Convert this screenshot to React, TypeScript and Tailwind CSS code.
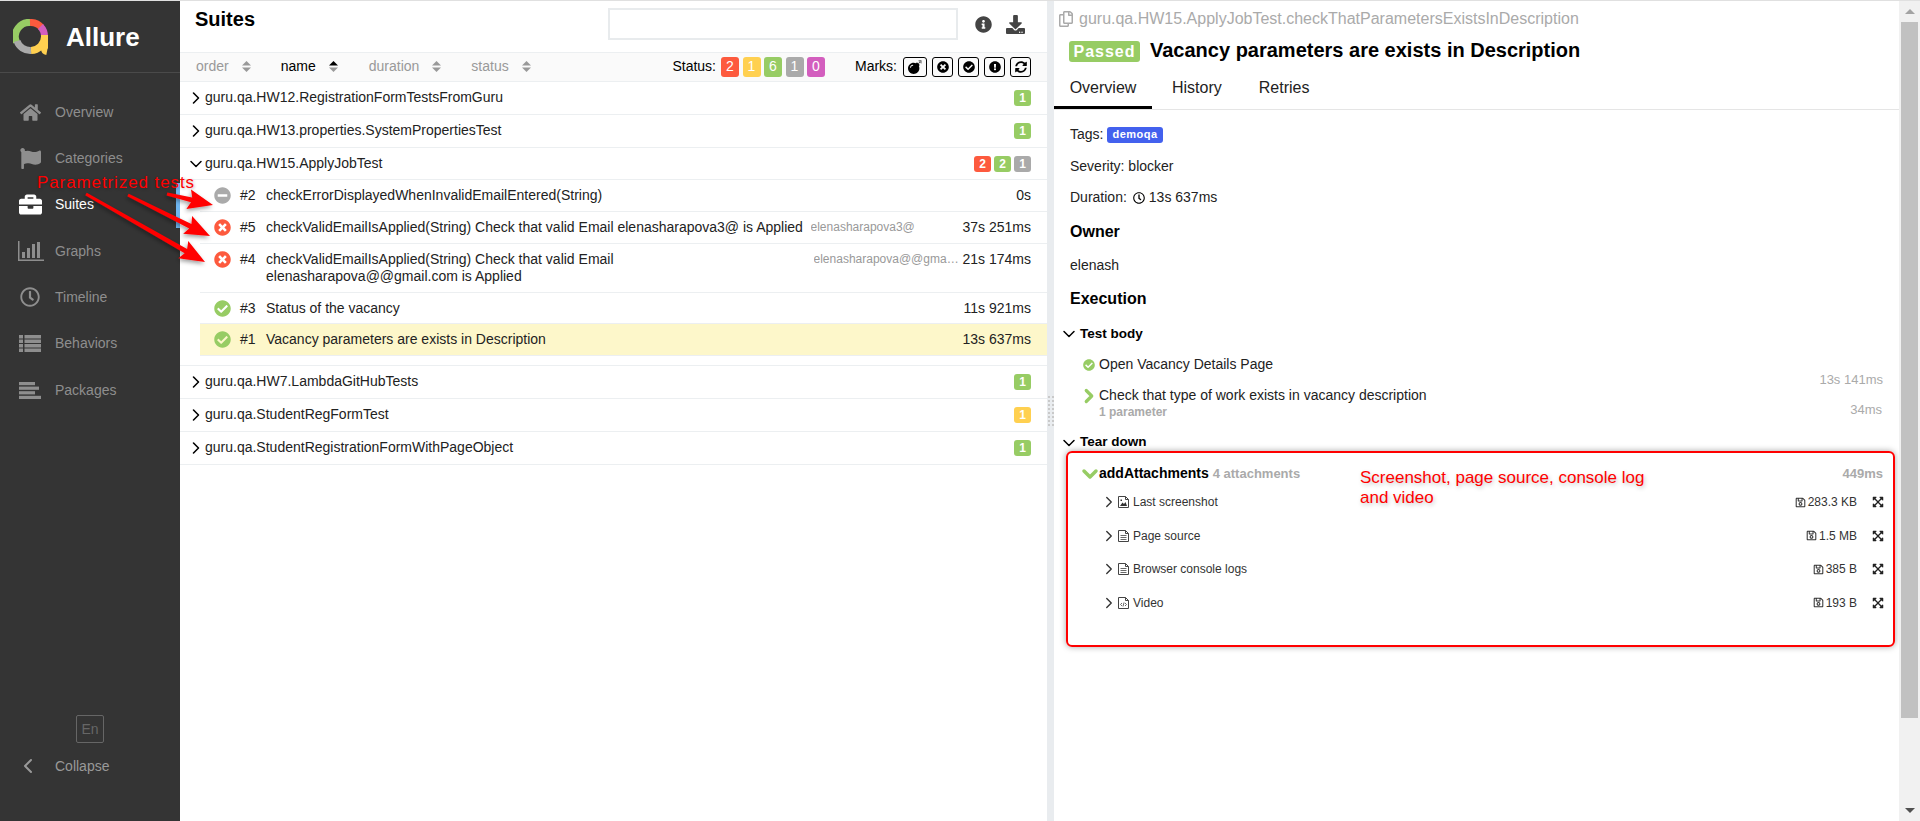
import type { ReactNode } from 'react';
import {
  FaBomb,
  FaBriefcase,
  FaCheckCircle,
  FaDownload,
  FaExclamationCircle,
  FaExpandArrowsAlt,
  FaFlag,
  FaHome,
  FaInfoCircle,
  FaMinusCircle,
  FaRegClock,
  FaRegCopy,
  FaRegSave,
  FaSyncAlt,
  FaTimesCircle,
} from 'react-icons/fa';
import { ChevronDown, ChevronLeft, ChevronRight } from 'lucide-react';

function BarChartIcon() {
  return (
    <svg width="26" height="20" viewBox="0 0 26 20" fill="currentColor" className="ml-[2px]">
      <rect x="0" y="0" width="1.5" height="20" />
      <rect x="0" y="18.5" width="26" height="1.5" />
      <rect x="4" y="11" width="3" height="6" />
      <rect x="9" y="7" width="3" height="10" />
      <rect x="14" y="3" width="3" height="14" />
      <rect x="19" y="1" width="3" height="16" />
    </svg>
  );
}

function BehaviorsIcon() {
  return (
    <svg width="22" height="17" viewBox="0 0 22 17" fill="currentColor">
      {[0, 4.5, 9, 13.5].map((y) => (
        <g key={y}>
          <rect x="0" y={y} width="4" height="3.5" />
          <rect x="5.5" y={y} width="16.5" height="3.5" />
        </g>
      ))}
    </svg>
  );
}

function PackagesIcon() {
  return (
    <svg width="22" height="17" viewBox="0 0 22 17" fill="currentColor">
      <rect x="0" y="0" width="16" height="3.2" />
      <rect x="0" y="4.6" width="20" height="3.2" />
      <rect x="0" y="9.2" width="16" height="3.2" />
      <rect x="0" y="13.8" width="22" height="3.2" />
    </svg>
  );
}

function Logo() {
  return (
    <svg width="36" height="36" viewBox="0 0 36 36" fill="none" strokeWidth="7">
      <path d="M3.5 23 A14 14 0 0 1 18 3.5" stroke="#97cc64" />
      <path d="M17 3.5 A14 14 0 0 1 28.5 8.5" stroke="#fd5a3e" />
      <path d="M27.5 7.5 A14 14 0 0 1 31.5 17.5" stroke="#d35ebe" />
      <path d="M31.5 16 V30 Q31.5 32 34 32.5 M31.5 17.5 A14 14 0 0 1 18 31.5" stroke="#ffd050" />
      <path d="M18 31.5 A14 14 0 0 1 4 22" stroke="#aaaaaa" />
    </svg>
  );
}

const navItems: { label: string; icon: ReactNode; active?: boolean }[] = [
  { label: 'Overview', icon: <FaHome size={21} /> },
  { label: 'Categories', icon: <FaFlag size={21} /> },
  { label: 'Suites', icon: <FaBriefcase size={23} />, active: true },
  { label: 'Graphs', icon: <BarChartIcon /> },
  { label: 'Timeline', icon: <FaRegClock size={20} /> },
  { label: 'Behaviors', icon: <BehaviorsIcon /> },
  { label: 'Packages', icon: <PackagesIcon /> },
];

function Sidebar() {
  return (
    <aside className="relative flex h-full w-[180px] shrink-0 flex-col bg-[#343434]">
      <div className="flex h-[72px] items-center gap-[17px] border-b border-[#4a4a4a] pl-[13px] pt-[1px]">
        <Logo />
        <span className="text-[26px] font-bold text-white">Allure</span>
      </div>
      <nav className="flex flex-col pt-[16px]">
        {navItems.map((item) => (
          <div
            key={item.label}
            className={`flex h-[46.33px] items-center ${item.active ? 'text-white' : 'text-[#8e8e8e]'}`}
          >
            <span className="flex w-[55px] justify-center pl-[5px]">{item.icon}</span>
            <span className="text-[14px]">{item.label}</span>
          </div>
        ))}
      </nav>
      <div className="mt-auto flex flex-col pb-[41px]">
        <div className="ml-[76px] flex h-[28px] w-[28px] items-center justify-center rounded-[2px] border border-[#666] text-[14px] text-[#666]">
          En
        </div>
        <div className="mt-[9px] flex h-[28px] items-center text-[#999]">
          <span className="flex w-[55px] justify-center pl-[1px]">
            <ChevronLeft size={24} strokeWidth={2} />
          </span>
          <span className="text-[14px]">Collapse</span>
        </div>
      </div>
      <div className="absolute right-0 top-[182px] h-[45px] w-[4px] bg-[#6eb5f0]" />
    </aside>
  );
}

function SortCaret({ active }: { active?: boolean }) {
  return (
    <svg width="9" height="11" viewBox="0 0 9 11" className="ml-[13px]">
      <path d="M4.5 0 L9 4.5 H0 Z" fill={active ? '#000' : '#999'} />
      <path d="M4.5 11 L9 6.5 H0 Z" fill="#999" />
    </svg>
  );
}

const statusBg: Record<string, string> = {
  failed: 'bg-[#fd5a3e]',
  broken: 'bg-[#ffd050]',
  passed: 'bg-[#97cc64]',
  skipped: 'bg-[#aaaaaa]',
  unknown: 'bg-[#d35ebe]',
};

function Count({ status, n, large }: { status: string; n: number; large?: boolean }) {
  return (
    <span
      className={`flex items-center justify-center rounded-[3px] text-white ${statusBg[status]} ${
        large ? 'h-[20px] w-[18px] text-[14px]' : 'h-[16px] w-[17px] text-[12px] font-bold'
      }`}
    >
      {n}
    </span>
  );
}

function Mark({ children, wide }: { children: ReactNode; wide?: boolean }) {
  return (
    <span
      className={`flex h-[20px] items-center justify-center rounded-[3px] border border-black text-black ${
        wide ? 'w-[24px]' : 'w-[21px]'
      }`}
    >
      {children}
    </span>
  );
}

function SuitesToolbar() {
  return (
    <div className="flex h-[30px] items-center border-y border-[#eceff1] bg-[#fafafa] pb-[1px] pl-[16px] pr-[16px] text-[14px]">
      <span className="text-[#999]">order</span>
      <SortCaret />
      <span className="ml-[30px] text-black">name</span>
      <SortCaret active />
      <span className="ml-[31px] text-[#999]">duration</span>
      <SortCaret />
      <span className="ml-[30px] text-[#999]">status</span>
      <SortCaret />
      <span className="ml-auto text-black">Status:</span>
      <div className="ml-[5px] flex gap-[3.5px]">
        <Count status="failed" n={2} large />
        <Count status="broken" n={1} large />
        <Count status="passed" n={6} large />
        <Count status="skipped" n={1} large />
        <Count status="unknown" n={0} large />
      </div>
      <span className="ml-[30px] text-black">Marks:</span>
      <div className="ml-[6px] flex gap-[5px]">
        <Mark wide><FaBomb size={14} /></Mark>
        <Mark><FaTimesCircle size={12} /></Mark>
        <Mark><FaCheckCircle size={12} /></Mark>
        <Mark><FaExclamationCircle size={12} /></Mark>
        <Mark><FaSyncAlt size={12} /></Mark>
      </div>
    </div>
  );
}

function GroupRow({
  name,
  open,
  counts,
}: {
  name: string;
  open?: boolean;
  counts: [string, number][];
}) {
  return (
    <div
      className={`flex items-center border-b border-[#eceff1] pl-[7px] pr-[16px] text-[14px] text-[#222] ${
        open ? 'h-[32px]' : 'h-[33px]'
      }`}
    >
      <span className="flex w-[18px] justify-center text-black">
        {open ? (
          <ChevronDown size={20} strokeWidth={1.8} className="shrink-0" />
        ) : (
          <ChevronRight size={20} strokeWidth={1.9} className="shrink-0" />
        )}
      </span>
      <span className="pb-[1px]">{name}</span>
      <div className="ml-auto flex gap-[3px]">
        {counts.map(([status, n]) => (
          <Count key={status} status={status} n={n} />
        ))}
      </div>
    </div>
  );
}

const statusIcon: Record<string, ReactNode> = {
  skipped: <FaMinusCircle size={17} className="text-[#aaaaaa]" />,
  failed: <FaTimesCircle size={17} className="text-[#fd5a3e]" />,
  passed: <FaCheckCircle size={17} className="text-[#97cc64]" />,
};

type TestRowProps = {
  status: string;
  order: number;
  name: ReactNode;
  param?: string;
  time: string;
  selected?: boolean;
  compact?: boolean;
  paramClass?: string;
};

function TestRow({ status, order, name, param, time, selected, compact, paramClass }: TestRowProps) {
  return (
    <div
      className={`ml-[20px] flex items-start border-b border-[#eceff1] pt-[7px] pr-[16px] text-[14px] leading-[17px] ${
        compact ? 'pb-[6px]' : 'pb-[7px]'
      } ${selected ? 'bg-[#fdf7ca]' : ''}`}
    >
      <span className="flex w-[40px] justify-center pl-[4px]">{statusIcon[status]}</span>
      <span className="w-[26px] text-[#222]">#{order}</span>
      <span className="min-w-0 flex-1 text-[#222]">{name}</span>
      {param && (
        <span className={`truncate text-left text-[12px] text-[#999] ${paramClass}`}>{param}</span>
      )}
      <span className="whitespace-nowrap text-right text-[#222]">{time}</span>
    </div>
  );
}

function SuitesPanel() {
  return (
    <section className="flex h-full w-[867px] shrink-0 flex-col">
      <div className="flex h-[51px] items-start pl-[15px] pr-[22px]">
        <h2 className="pt-[5px] text-[20px] font-bold leading-[26px] text-black">Suites</h2>
        <div className="ml-auto mt-[7px] h-[32px] w-[350px] border-2 border-[#e8ebed]" />
        <FaInfoCircle size={17} className="ml-[17px] mt-[15px] text-[#444]" />
        <FaDownload size={19} className="ml-[14px] mt-[14px] text-[#444]" />
      </div>
      <SuitesToolbar />
      <GroupRow name="guru.qa.HW12.RegistrationFormTestsFromGuru" counts={[['passed', 1]]} />
      <GroupRow name="guru.qa.HW13.properties.SystemPropertiesTest" counts={[['passed', 1]]} />
      <GroupRow
        name="guru.qa.HW15.ApplyJobTest"
        open
        counts={[['failed', 2], ['passed', 2], ['skipped', 1]]}
      />
      <TestRow status="skipped" order={2} name="checkErrorDisplayedWhenInvalidEmailEntered(String)" time="0s" />
      <TestRow
        status="failed"
        order={5}
        name="checkValidEmailIsApplied(String) Check that valid Email elenasharapova3@ is Applied"
        param="elenasharapova3@"
        paramClass="mr-[6px] w-[146px]"
        time="37s 251ms"
      />
      <TestRow
        status="failed"
        order={4}
        name={
          <>
            checkValidEmailIsApplied(String) Check that valid Email
            <br />
            elenasharapova@@gmail.com is Applied
          </>
        }
        param="elenasharapova@@gmail.com"
        paramClass="mr-[2px] w-[147px]"
        time="21s 174ms"
      />
      <TestRow status="passed" order={3} name="Status of the vacancy" time="11s 921ms" compact />
      <TestRow status="passed" order={1} name="Vacancy parameters are exists in Description" time="13s 637ms" selected />
      <div className="h-[10px] border-b border-[#eceff1]" />
      <GroupRow name="guru.qa.HW7.LambdaGitHubTests" counts={[['passed', 1]]} />
      <GroupRow name="guru.qa.StudentRegFormTest" counts={[['broken', 1]]} />
      <GroupRow name="guru.qa.StudentRegistrationFormWithPageObject" counts={[['passed', 1]]} />
    </section>
  );
}

function Splitter() {
  return (
    <div className="flex h-full w-[7px] shrink-0 items-center justify-center bg-[#e9ecef]">
      <div className="grid grid-cols-2 gap-[2px]">
        {Array.from({ length: 16 }).map((_, i) => (
          <span key={i} className="h-[2px] w-[2px] bg-[#c9c9c9]" />
        ))}
      </div>
    </div>
  );
}

function DocIcon({ kind }: { kind: 'image' | 'text' | 'code' }) {
  return (
    <svg width="11" height="12" viewBox="0 0 11 12" fill="none" stroke="#444" strokeWidth="1">
      <path d="M0.5 0.5 H7.5 L10.5 3.5 V11.5 H0.5 Z" />
      <path d="M7.5 0.5 V3.5 H10.5" />
      {kind === 'image' && (
        <path d="M2 10 L4.5 6.5 L6 8 L7.5 6 L9 10 Z M2.5 3.5 H4 V5 H2.5 Z" fill="#333" stroke="none" />
      )}
      {kind === 'text' && <path d="M2.5 5.5 H8.5 M2.5 7.5 H8.5 M2.5 9.5 H8.5" strokeWidth="0.8" />}
      {kind === 'code' && <path d="M4 6 L2.5 7.5 L4 9 M7 6 L8.5 7.5 L7 9 M6 5.5 L5 9.5" strokeWidth="0.8" />}
    </svg>
  );
}

const attachments: { name: string; icon: ReactNode; size: string }[] = [
  { name: 'Last screenshot', icon: <DocIcon kind="image" />, size: '283.3 KB' },
  { name: 'Page source', icon: <DocIcon kind="text" />, size: '1.5 MB' },
  { name: 'Browser console logs', icon: <DocIcon kind="text" />, size: '385 B' },
  { name: 'Video', icon: <DocIcon kind="code" />, size: '193 B' },
];

function AttachmentRow({ name, icon, size }: { name: string; icon: ReactNode; size: string }) {
  return (
    <div className="flex h-[33.5px] items-center pl-[32px] pr-[9px] text-[12px] text-[#333]">
      <ChevronRight size={18} strokeWidth={1.8} className="shrink-0 text-[#333]" />
      <span className="w-[15px] shrink-0">{icon}</span>
      <span>{name}</span>
      <span className="ml-auto flex items-center gap-[2px]">
        <FaRegSave size={11} />
        {size}
      </span>
      <FaExpandArrowsAlt size={12} className="ml-[15px] text-[#222]" />
    </div>
  );
}

function TestResult() {
  return (
    <section className="flex h-full min-w-0 flex-1 flex-col">
      <div className="flex h-[36px] items-center pl-[4px] text-[16px] text-[#aaa]">
        <FaRegCopy size={16} className="mr-[5px]" />
        guru.qa.HW15.ApplyJobTest.checkThatParametersExistsInDescription
      </div>
      <div className="flex items-center pl-[15px] pt-[3px]">
        <span className="flex h-[21px] w-[71px] items-center justify-center rounded-[3px] bg-[#97cc64] text-[16px] font-bold tracking-[1px] text-white">
          Passed
        </span>
        <h1 className="mb-[2px] ml-[10px] text-[20px] font-bold leading-[21px] text-black">
          Vacancy parameters are exists in Description
        </h1>
      </div>
      <div className="flex h-[47px] border-b border-[#e5e5e5] text-[16px] text-[#222]">
        <div className="flex w-[98px] items-center justify-center border-b-[3px] border-black pt-[6px]">Overview</div>
        <div className="ml-[20px] flex items-center pb-[3px] pt-[6px]">History</div>
        <div className="ml-[37px] flex items-center pb-[3px] pt-[6px]">Retries</div>
      </div>
      <div className="pl-[16px] pt-[14px] text-[14px] text-[#222]">
        <div className="flex h-[21px] items-center">
          Tags:
          <span className="ml-[4px] flex h-[16px] items-center rounded-[3px] bg-[#4361ee] px-[5px] text-[11px] font-bold tracking-[0.5px] text-white">
            demoqa
          </span>
        </div>
        <div className="mt-[11px] h-[21px] leading-[21px]">Severity: blocker</div>
        <div className="mt-[10px] flex h-[21px] items-center">
          Duration:
          <FaRegClock size={12} className="ml-[6px] mr-[4px] text-black" />
          13s 637ms
        </div>
        <h3 className="mt-[13px] text-[16px] font-bold leading-[22px] text-black">Owner</h3>
        <div className="mt-[12px] leading-[21px]">elenash</div>
        <h3 className="mt-[12px] text-[16px] font-bold leading-[22px] text-black">Execution</h3>
      </div>
      <div className="flex items-center pl-[5px] pt-[13px] text-[13.5px] font-bold leading-[21px] text-black">
        <ChevronDown size={20} strokeWidth={1.8} />
        <span className="ml-[1px]">Test body</span>
      </div>
      <div className="mt-[10px] flex h-[21px] items-center pl-[29px] pr-[17px] text-[14px] text-[#222]">
        <FaCheckCircle size={12} className="mr-[4px] text-[#97cc64]" />
        Open Vacancy Details Page
      </div>
      <div className="relative mt-[10px] pl-[29px] pr-[17px] text-[14px] text-[#222]">
        <div className="flex h-[21px] items-center">
          <ChevronRight size={22} strokeWidth={3.5} className="-ml-[5px] -mr-[1px] shrink-0 text-[#97cc64]" />
          Check that type of work exists in vacancy description
          <span className="ml-auto pt-[29px] text-[13px] text-[#aaa]">34ms</span>
        </div>
        <div className="-mt-[1px] pl-[16px] text-[12px] font-bold leading-[14px] text-[#aaa]">1 parameter</div>
        <span className="absolute -top-[15px] right-[16px] text-[13px] text-[#aaa]">13s 141ms</span>
      </div>
      <div className="mt-[13px] flex h-[21px] items-center pl-[5px] text-[13.5px] font-bold text-black">
        <ChevronDown size={20} strokeWidth={1.8} />
        <span className="ml-[1px]">Tear down</span>
      </div>
      <div className="ml-[12px] mr-[4px] mt-[-2.5px] h-[196px] rounded-[6px] border-2 border-[#ff0000] shadow-[0_0_6px_rgba(0,0,0,0.35)]">
        <div className="flex h-[33px] items-center pl-[10px] pr-[10px] pt-[9px]">
          <ChevronDown size={24} strokeWidth={3.5} className="-mr-[3px] shrink-0 text-[#97cc64]" />
          <span className="text-[14px] font-bold text-black">addAttachments</span>
          <span className="ml-[4px] text-[13px] font-bold text-[#aaa]">4 attachments</span>
          <span className="ml-auto text-[13px] font-bold text-[#aaa]">449ms</span>
        </div>
        {attachments.map((a) => (
          <AttachmentRow key={a.name} {...a} />
        ))}
      </div>
    </section>
  );
}

function Scrollbar() {
  return (
    <div className="flex h-full w-[21px] shrink-0 flex-col items-center bg-[#f1f1f1]">
      <div className="flex h-[21px] items-center justify-center">
        <span className="h-0 w-0 border-x-[5px] border-b-[5px] border-x-transparent border-b-[#a3a3a3]" />
      </div>
      <div className="h-[696px] w-[17px] bg-[#c1c1c1]" />
      <div className="mt-auto flex h-[21px] items-center justify-center">
        <span className="h-0 w-0 border-x-[5px] border-t-[5px] border-x-transparent border-t-[#505050]" />
      </div>
    </div>
  );
}

function Arrow({ x1, y1, x2, y2 }: { x1: number; y1: number; x2: number; y2: number }) {
  const angle = Math.atan2(y2 - y1, x2 - x1);
  const len = Math.hypot(x2 - x1, y2 - y1);
  const deg = (angle * 180) / Math.PI;
  return (
    <g transform={`translate(${x1} ${y1}) rotate(${deg})`}>
      <path
        d={`M0 -1.5 L${len - 22} -2.5 L${len - 25} -10 L${len} 0 L${len - 25} 10 L${len - 22} 2.5 L0 1.5 Z`}
        fill="#ff0000"
      />
    </g>
  );
}

// screenshot annotations drawn over the report
function Annotations() {
  return (
    <>
      <svg className="pointer-events-none absolute left-0 top-0" width="260" height="280">
        <defs>
          <filter id="arrow-shadow" x="-20%" y="-20%" width="140%" height="140%">
            <feDropShadow dx="-1" dy="2" stdDeviation="2" floodColor="#000" floodOpacity="0.4" />
          </filter>
        </defs>
        <g filter="url(#arrow-shadow)">
          <Arrow x1={167} y1={193} x2={213} y2={204} />
          <Arrow x1={128} y1={194} x2={210} y2={235} />
          <Arrow x1={86} y1={193} x2={205} y2={261} />
        </g>
      </svg>
      <div className="absolute left-[37px] top-[172px] text-[17px] leading-[20px] tracking-[0.9px] text-[#ff0000] [text-shadow:1px_1px_3px_rgba(0,0,0,0.25)]">
        Parametrized tests
      </div>
      <div className="absolute left-[1360px] top-[467px] text-[17px] leading-[20px] text-[#ff0000] [text-shadow:1px_2px_4px_rgba(0,0,0,0.25)]">
        Screenshot, page source, console log
        <br />
        and video
      </div>
    </>
  );
}

export default function App() {
  return (
    <div className="relative flex h-[821px] w-[1920px] overflow-hidden border-t border-[#e0e0e0] bg-white font-['Liberation_Sans',Arial,sans-serif]">
      <Sidebar />
      <SuitesPanel />
      <Splitter />
      <TestResult />
      <Scrollbar />
      <Annotations />
    </div>
  );
}
